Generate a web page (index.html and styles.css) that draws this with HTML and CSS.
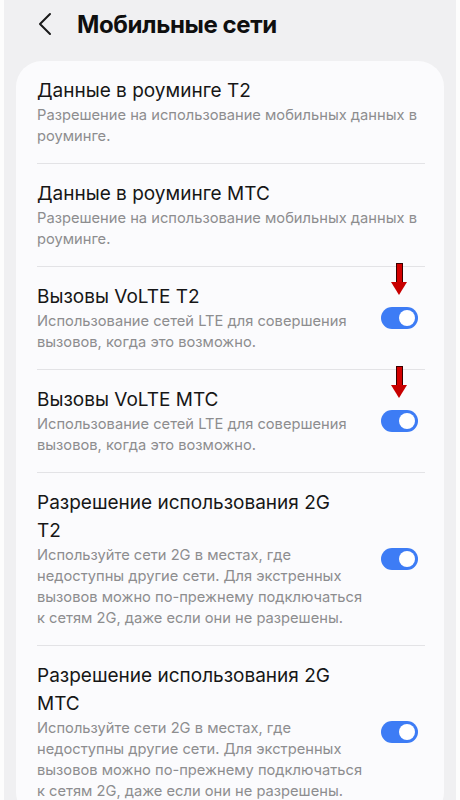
FILE: index.html
```html
<!DOCTYPE html>
<html lang="ru">
<head>
    <meta charset="UTF-8">
    <meta name="viewport" content="width=device-width, initial-scale=1.0">
    <title>Мобильные сети</title>
    <link rel="stylesheet" href="styles.css">
</head>
<body>
    <div class="screen">
        <header class="topbar">
            <svg class="back" width="14" height="24" viewBox="0 0 14 24">
                <path d="M12 2 L2 12 L12 22" fill="none" stroke="#1a1a1a" stroke-width="2" stroke-linecap="round" stroke-linejoin="round"/>
            </svg>
            <h1>Мобильные сети</h1>
        </header>

        <div class="card">
            <div class="item">
                <div class="text">
                    <div class="title">Данные в роуминге T2</div>
                    <div class="sub">Разрешение на использование мобильных данных в роуминге.</div>
                </div>
            </div>
            <div class="item">
                <div class="text">
                    <div class="title">Данные в роуминге МТС</div>
                    <div class="sub">Разрешение на использование мобильных данных в роуминге.</div>
                </div>
            </div>
            <div class="item">
                <div class="text narrow">
                    <div class="title">Вызовы VoLTE T2</div>
                    <div class="sub">Использование сетей LTE для совершения вызовов, когда это возможно.</div>
                </div>
                <div class="switch marked"><span class="knob"></span></div>
            </div>
            <div class="item">
                <div class="text narrow">
                    <div class="title">Вызовы VoLTE МТС</div>
                    <div class="sub">Использование сетей LTE для совершения вызовов, когда это возможно.</div>
                </div>
                <div class="switch marked"><span class="knob"></span></div>
            </div>
            <div class="item">
                <div class="text narrow">
                    <div class="title">Разрешение использования 2G T2</div>
                    <div class="sub">Используйте сети 2G в местах, где недоступны другие сети. Для экстренных вызовов можно по-прежнему подключаться к сетям 2G, даже если они не разрешены.</div>
                </div>
                <div class="switch"><span class="knob"></span></div>
            </div>
            <div class="item">
                <div class="text narrow">
                    <div class="title">Разрешение использования 2G МТС</div>
                    <div class="sub">Используйте сети 2G в местах, где недоступны другие сети. Для экстренных вызовов можно по-прежнему подключаться к сетям 2G, даже если они не разрешены.</div>
                </div>
                <div class="switch"><span class="knob"></span></div>
            </div>
        </div>
    </div>
</body>
</html>
```

FILE: styles.css
```css
html {
    background-color: #fdfdfd;
}
body {
    margin: 0;
    font-family: Inter, "Noto Sans", sans-serif;
    color: #161616;
}
.screen {
    margin: 0 4px;
    height: 800px;
    overflow: hidden;
    background-color: #f0f0f2;
}
.topbar {
    display: flex;
    align-items: center;
    height: 48px;
    padding-left: 34px;
}
.back {
    margin-right: 25px;
}
.topbar h1 {
    margin: 0;
    font-size: 24px;
    font-weight: 700;
    letter-spacing: -0.4px;
    color: #0f0f0f;
}
.card {
    margin: 13px 12px 0;
    background-color: #fbfbfd;
    border-radius: 26px;
    padding: 0 19px 0 21px;
}
.item {
    display: flex;
    align-items: center;
    padding: 16px 0;
    border-bottom: 1px solid #e3e3e6;
}
.item:last-child {
    border-bottom: none;
}
.text {
    flex: 1;
}
.text.narrow {
    flex: 0 0 331px;
}
.narrow .title {
    max-width: 305px;
}
.title {
    font-size: 19px;
    line-height: 28px;
}
.sub {
    font-size: 14.7px;
    line-height: 21px;
    color: #8d8d8f;
}
.switch {
    position: relative;
    margin-left: auto;
    margin-right: 7px;
    width: 37px;
    height: 22px;
    border-radius: 11px;
    background-color: #3d7cf5;
}
.knob {
    position: absolute;
    top: 3px;
    right: 3px;
    width: 16px;
    height: 16px;
    border-radius: 50%;
    background-color: #fff;
}
/* red pointer drawn over the screenshot */
.marked::before {
    content: "";
    position: absolute;
    left: 15px;
    top: -44px;
    width: 5px;
    height: 19px;
    background-color: #d40000;
    border: 1px solid #3a0000;
    border-bottom: none;
}
.marked::after {
    content: "";
    position: absolute;
    left: 10px;
    top: -25px;
    width: 0;
    height: 0;
    border-left: 8.5px solid transparent;
    border-right: 8.5px solid transparent;
    border-top: 13px solid #c80000;
}
```
